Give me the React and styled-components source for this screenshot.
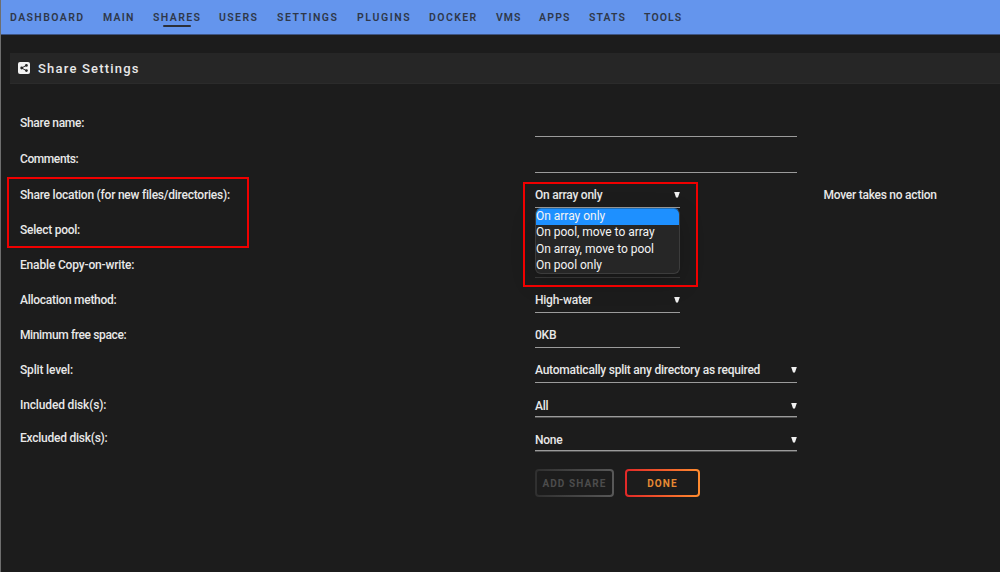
import styled, { createGlobalStyle } from "styled-components";

const GlobalStyle = createGlobalStyle`
  * {
    box-sizing: border-box;
  }

  body {
    margin: 0;
    background-color: #1c1c1c;
    color: #e8e8e8;
    font-family: "Roboto", "Liberation Sans", sans-serif;
    font-size: 12px;
    overflow: hidden;
  }
`;

const Page = styled.div`
  position: relative;
  width: 1000px;
  height: 572px;
  background-color: #1c1c1c;
  border-left: 1px solid #6e6e6e;
`;

const Nav = styled.nav`
  height: 35px;
  padding: 10px 0 0 9px;
  display: flex;
  background-color: #6495ed;
  border-bottom: 1px solid #3d5483;
`;

const NavItem = styled.a`
  width: ${(props) => props.$width}px;
  flex: none;
  color: #2f3849;
  font-size: 10.5px;
  font-weight: 600;
  line-height: 15px;
  letter-spacing: ${(props) => props.$spacing}px;
  text-transform: uppercase;
  white-space: nowrap;
`;

const ActiveBar = styled.span`
  display: block;
  width: 28px;
  height: 2px;
  margin-left: 10px;
  border-radius: 1px;
  background-color: #2b2f38;
`;

const Title = styled.h1`
  height: 31px;
  margin: 18px 0 0 9px;
  padding-left: 8px;
  display: flex;
  align-items: center;
  gap: 8px;
  background-color: #262626;
  border-bottom: 1px solid #2b2b2b;
  font-size: 13px;
  font-weight: 500;
  letter-spacing: 1.2px;
`;

const ShareIcon = styled.svg`
  width: 12px;
  height: 12px;
`;

const Form = styled.div`
  padding: 17px 0 0 19px;
`;

const Row = styled.div`
  height: ${(props) => props.$height}px;
  display: grid;
  grid-template-columns: 515px 288.5px 1fr;
`;

const Label = styled.label`
  align-self: end;
  padding-bottom: ${(props) => props.$bottom}px;
  font-weight: 500;
  line-height: 16px;
  letter-spacing: ${(props) => props.$spacing}px;
`;

const Field = styled.div`
  position: relative;
  align-self: end;
  width: ${(props) => (props.$wide ? 262 : 145)}px;
  height: 24px;
  padding-top: ${(props) => (props.$low ? 2 : 0)}px;
  padding-bottom: ${(props) => (props.$low ? 0 : 2)}px;
  display: flex;
  align-items: center;
  justify-content: space-between;
  border-bottom: 1px solid ${(props) => (props.$dim ? "#3a3a3a" : "#9b9b9b")};
  box-shadow: ${(props) => (props.$low ? "0 1px 0 #505050" : "none")};
  font-weight: 500;
  letter-spacing: -0.23px;
`;

const Arrow = styled.span`
  width: 6px;
  height: 6px;
  background-color: #f0f0f0;
  clip-path: polygon(0 0, 100% 0, 66% 100%, 34% 100%);
`;

const Menu = styled.ul`
  position: absolute;
  z-index: 1;
  top: 24px;
  left: 0;
  width: 145px;
  height: 66px;
  margin: 0;
  padding: 0;
  list-style: none;
  overflow: hidden;
  background-color: #262626;
  border: 1px solid #3c3c3c;
  border-top-color: #1e6fb8;
  border-radius: 6px;
  box-shadow: 0 8px 24px rgba(0, 0, 0, 0.2);
`;

const Option = styled.li`
  height: 16.3px;
  line-height: 15px;
  font-weight: 400;
  letter-spacing: -0.02px;
  color: #f4f4f4;
  background-color: ${(props) => (props.$selected ? "#1e90ff" : "transparent")};
`;

const Note = styled.span`
  align-self: end;
  padding-bottom: 5px;
  font-weight: 500;
  line-height: 16px;
  letter-spacing: -0.26px;
`;

const Buttons = styled.div`
  display: flex;
  gap: 11px;
  padding: 18px 0 0 515px;
`;

const Button = styled.button`
  width: ${(props) => props.$width}px;
  height: 28px;
  padding: 0;
  border: 2px solid transparent;
  border-radius: 4px;
  background: linear-gradient(#1c1c1c, #1c1c1c) padding-box,
    linear-gradient(90deg, ${(props) => props.$from}, ${(props) => props.$to})
      border-box;
  color: ${(props) => props.$color};
  font-family: inherit;
  font-size: 10px;
  font-weight: 700;
  letter-spacing: 1.1px;
  white-space: nowrap;
`;

const Highlight = styled.div`
  position: absolute;
  z-index: 2;
  left: ${(props) => props.$left}px;
  top: ${(props) => props.$top}px;
  width: ${(props) => props.$width}px;
  height: ${(props) => props.$height}px;
  border: 2px solid #f00000;
`;

const navItems = [
  { name: "Dashboard", width: 93, spacing: 1.4 },
  { name: "Main", width: 50, spacing: 1.2 },
  { name: "Shares", width: 66, spacing: 1.4, active: true },
  { name: "Users", width: 58, spacing: 1.4 },
  { name: "Settings", width: 80, spacing: 1.5 },
  { name: "Plugins", width: 72, spacing: 1.6 },
  { name: "Docker", width: 67, spacing: 1.4 },
  { name: "VMs", width: 43, spacing: 1 },
  { name: "Apps", width: 50, spacing: 1.2 },
  { name: "Stats", width: 55, spacing: 1.1 },
  { name: "Tools", width: 50, spacing: 1.1 },
];

const locations = [
  "On array only",
  "On pool, move to array",
  "On array, move to pool",
  "On pool only",
];

const rows = [
  { label: "Share name:", spacing: -0.28, height: 36, bottom: 6, wide: true },
  { label: "Comments:", spacing: -0.42, height: 36, bottom: 6, wide: true },
  {
    label: "Share location (for new files/directories):",
    spacing: -0.23,
    height: 35,
    value: "On array only",
    select: true,
    options: locations,
    note: "Mover takes no action",
  },
  { label: "Select pool:", spacing: -0.25, height: 35, select: true },
  {
    label: "Enable Copy-on-write:",
    spacing: -0.17,
    height: 35,
    select: true,
    dim: true,
  },
  {
    label: "Allocation method:",
    spacing: -0.28,
    height: 35,
    value: "High-water",
    select: true,
  },
  { label: "Minimum free space:", spacing: -0.37, height: 35, value: "0KB" },
  {
    label: "Split level:",
    spacing: -0.17,
    height: 35,
    value: "Automatically split any directory as required",
    select: true,
    wide: true,
  },
  {
    label: "Included disk(s):",
    spacing: -0.16,
    height: 34,
    bottom: 4,
    value: "All",
    select: true,
    wide: true,
    low: true,
  },
  {
    label: "Excluded disk(s):",
    spacing: -0.24,
    height: 34,
    value: "None",
    select: true,
    wide: true,
    low: true,
  },
];

function App() {
  return (
    <Page>
      <GlobalStyle />
      <Nav>
        {navItems.map((item) => (
          <NavItem key={item.name} $width={item.width} $spacing={item.spacing}>
            {item.name}
            {item.active && <ActiveBar />}
          </NavItem>
        ))}
      </Nav>
      <Title>
        <ShareIcon viewBox="0 0 12 12">
          <rect width="12" height="12" rx="2" fill="#f2f2f2" />
          <path d="M8.3 3.3 L3.8 6 L8.3 8.7" fill="none" stroke="#262626" />
          <circle cx="8.4" cy="3.4" r="1.4" fill="#262626" />
          <circle cx="3.7" cy="6" r="1.4" fill="#262626" />
          <circle cx="8.4" cy="8.6" r="1.4" fill="#262626" />
        </ShareIcon>
        Share Settings
      </Title>
      <Form>
        {rows.map((row) => (
          <Row key={row.label} $height={row.height}>
            <Label $bottom={row.bottom || 5} $spacing={row.spacing}>
              {row.label}
            </Label>
            <Field $wide={row.wide} $low={row.low} $dim={row.dim}>
              <span>{row.value}</span>
              {row.select && <Arrow />}
              {row.options && (
                <Menu>
                  {row.options.map((option) => (
                    <Option key={option} $selected={option === row.value}>
                      {option}
                    </Option>
                  ))}
                </Menu>
              )}
            </Field>
            {row.note && <Note>{row.note}</Note>}
          </Row>
        ))}
        <Buttons>
          <Button $width={79} $from="#2f2f2f" $to="#585858" $color="#4c4c4c" disabled>
            ADD SHARE
          </Button>
          <Button $width={75} $from="#e22828" $to="#ff8c2f" $color="#e68a33">
            DONE
          </Button>
        </Buttons>
      </Form>
      <Highlight $left={6} $top={177} $width={242} $height={71} />
      <Highlight $left={522} $top={182} $width={175} $height={105} />
    </Page>
  );
}

export default App;
